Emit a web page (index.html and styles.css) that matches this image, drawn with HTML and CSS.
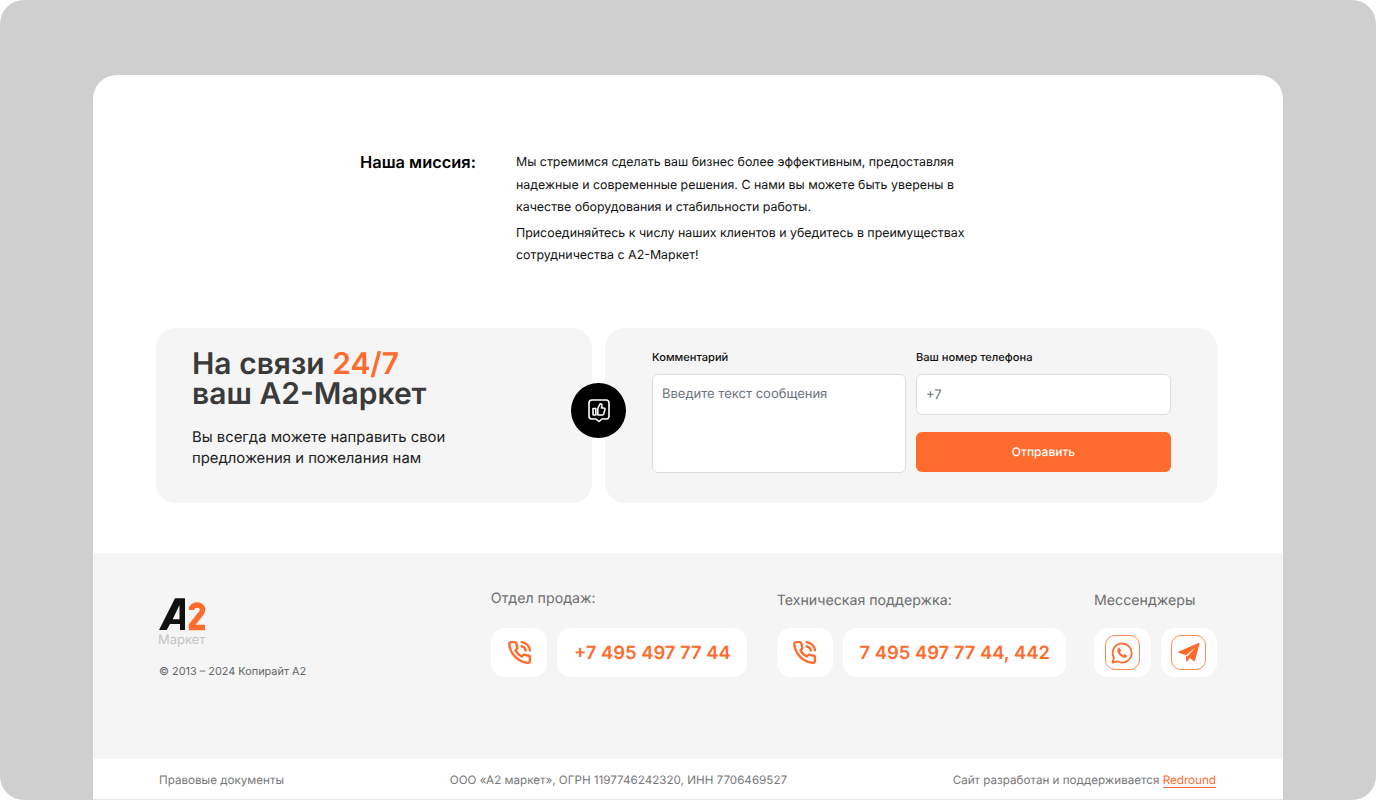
FILE: index.html
```html
<!DOCTYPE html>
<html lang="ru">
<head>
<meta charset="utf-8">
<title>А2-Маркет</title>
<link rel="stylesheet" href="styles.css">
</head>
<body>
<div class="screen">
  <main class="sheet">
    <section class="mission">
      <h2 class="mission-title">Наша миссия:</h2>
      <div class="mission-text">
        <p class="mission-p">Мы стремимся сделать ваш бизнес более эффективным, предоставляя надежные и современные решения. С нами вы можете быть уверены в качестве оборудования и стабильности работы.</p>
        <p class="mission-p">Присоединяйтесь к числу наших клиентов и убедитесь в преимуществах сотрудничества с А2-Маркет!</p>
      </div>
    </section>

    <section class="contact">
      <div class="card card-left">
        <h2 class="contact-title">На связи <span class="accent">24/7</span><br>ваш А2-Маркет</h2>
        <p class="contact-sub">Вы всегда можете направить свои предложения и пожелания нам</p>
      </div>
      <div class="badge">
        <svg width="24" height="26" viewBox="0 0 24 26" fill="none" stroke="#fff" stroke-width="1.6" stroke-linejoin="round" stroke-linecap="round">
          <path d="M5 2h14a3 3 0 0 1 3 3v13a3 3 0 0 1-3 3h-4l-3 2.500L9 21H5a3 3 0 0 1-3-3V5a3 3 0 0 1 3-3z"/>
          <path d="M6 10.500h2.800v6.500H6.800a.8.8 0 0 1-.8-.8z"/>
          <path d="M10.800 10.500l2.200-4.500c1.200-.4 2 .4 1.900 1.400l-.4 2.600h2.300c.8 0 1.300.7 1.100 1.400l-1.100 4.400c-.2.7-.7 1.200-1.400 1.200h-4.600z"/>
        </svg>
      </div>
      <form class="card card-right">
        <div class="field field-comment">
          <span class="field-label">Комментарий</span>
          <div class="input textarea">Введите текст сообщения</div>
        </div>
        <div class="field field-phone">
          <span class="field-label">Ваш номер телефона</span>
          <div class="input phone-input">+7</div>
          <div class="submit">Отправить</div>
        </div>
      </form>
    </section>

    <footer class="footer">
      <div class="brand">
        <svg class="logo" width="47" height="33" viewBox="0 0 47 33">
          <path fill="#111" fill-rule="evenodd" d="M0 32 16 .3H26V32H21V26H11L7.700 32zM20.500 7 13.700 21.300H20.500z"/>
          <path fill="none" stroke="#ff6b2c" stroke-width="5.500" d="M32.500 12C32.500 8.500 35 7 38 7c3.500 0 5.500 2 5.500 4.800 0 2.500-1.500 4.200-4 6.700L32.500 27.500V29.500H46"/>
        </svg>
        <div class="logo-text">Маркет</div>
        <div class="copyright">© 2013 – 2024 Копирайт А2</div>
      </div>

      <div class="contact-col col-sales">
        <div class="col-title">Отдел продаж:</div>
        <div class="pills">
          <div class="pill pill-icon">
            <svg class="phone" width="25" height="25" viewBox="0 0 24 24" fill="none" stroke="#ff6b2c" stroke-width="2.300" stroke-linecap="round" stroke-linejoin="round"><path d="M22 16.920v3a2 2 0 0 1-2.180 2 19.790 19.790 0 0 1-8.630-3.070 19.500 19.500 0 0 1-6-6 19.790 19.790 0 0 1-3.070-8.670A2 2 0 0 1 4.110 2h3a2 2 0 0 1 2 1.720 12.840 12.840 0 0 0 .7 2.810 2 2 0 0 1-.45 2.110L8.090 9.910a16 16 0 0 0 6 6l1.270-1.270a2 2 0 0 1 2.110-.45 12.840 12.840 0 0 0 2.810.7A2 2 0 0 1 22 16.920z"/><path d="M14.050 2a9 9 0 0 1 8 7.940"/><path d="M14.050 6A5 5 0 0 1 18 10"/></svg>
          </div>
          <div class="pill pill-num pill-sales">+7 495 497 77 44</div>
        </div>
      </div>

      <div class="contact-col col-support">
        <div class="col-title">Техническая поддержка:</div>
        <div class="pills">
          <div class="pill pill-icon">
            <svg class="phone" width="25" height="25" viewBox="0 0 24 24" fill="none" stroke="#ff6b2c" stroke-width="2.300" stroke-linecap="round" stroke-linejoin="round"><path d="M22 16.920v3a2 2 0 0 1-2.180 2 19.790 19.790 0 0 1-8.630-3.070 19.500 19.500 0 0 1-6-6 19.790 19.790 0 0 1-3.070-8.670A2 2 0 0 1 4.110 2h3a2 2 0 0 1 2 1.720 12.840 12.840 0 0 0 .7 2.810 2 2 0 0 1-.45 2.110L8.090 9.910a16 16 0 0 0 6 6l1.270-1.270a2 2 0 0 1 2.110-.45 12.840 12.840 0 0 0 2.810.7A2 2 0 0 1 22 16.920z"/><path d="M14.050 2a9 9 0 0 1 8 7.940"/><path d="M14.050 6A5 5 0 0 1 18 10"/></svg>
          </div>
          <div class="pill pill-num pill-support">7 495 497 77 44, 442</div>
        </div>
      </div>

      <div class="contact-col col-msg">
        <div class="col-title">Мессенджеры</div>
        <div class="pills">
          <div class="pill pill-icon">
            <div class="msg-frame">
              <svg width="22" height="22" viewBox="0 0 22 22" fill="none" stroke="#ff6b2c" stroke-width="1.800" stroke-linejoin="round" stroke-linecap="round"><path d="M1.500 20.500l1.400-4.800A9.500 9.500 0 1 1 6.500 19.300z"/><path fill="#ff6b2c" stroke-width=".6" d="M8 6.200c-.6 0-1.400.8-1.400 2 0 3.400 3.700 7.200 7.300 7.200 1.200 0 2-.9 2-1.500 0-.5-1.800-1.500-2.300-1.500-.5 0-.9 1-1.300 1-.9 0-3.400-2.400-3.400-3.300 0-.4 1-.8 1-1.300S8.500 6.200 8 6.200z"/></svg>
            </div>
          </div>
          <div class="pill pill-icon">
            <div class="msg-frame">
              <svg width="22" height="20" viewBox="0 0 22 20"><path fill="#ff6b2c" d="M21.500 1 17 17.500c-.2.600-.8.800-1.300.4l-4-3-2.700 3.300c-.4.500-1 .3-1-.3v-5.600L.8 9.800c-.7-.3-.7-1 0-1.200L20.500.1c.6-.2 1.100.3 1 .9z"/><path fill="#fff" d="M8 12.300 17.500 4.500 9.300 13.500z"/></svg>
            </div>
          </div>
        </div>
      </div>
    </footer>

    <div class="legal">
      <span>Правовые документы</span>
      <span>ООО «А2 маркет», ОГРН 1197746242320, ИНН 7706469527</span>
      <span>Сайт разработан и поддерживается <span class="legal-link">Redround</span></span>
    </div>
  </main>
</div>
</body>
</html>
```

FILE: styles.css
```css
* { box-sizing: border-box; }
html, body { margin: 0; padding: 0; background: #fff; }
body {
  font-family: Inter, "Noto Sans", sans-serif;
  width: 1376px;
  height: 800px;
  overflow: hidden;
  text-rendering: geometricPrecision;
}

.screen {
  width: 1376px;
  height: 800px;
  background: #cfcfcf;
  border-radius: 24px;
  padding: 75px 93px 0;
  overflow: hidden;
}
.sheet {
  background: #fff;
  border-radius: 24px 24px 0 0;
  height: 725px;
  border-bottom: 1px solid #e6e6e6;
  display: flex;
  flex-direction: column;
}

.mission {
  display: flex;
  padding: 76px 0 0 267px;
  height: 253px;
}
.mission-title {
  margin: 0;
  width: 156px;
  font-size: 16.400px;
  line-height: 22px;
  font-weight: 600;
  color: #000;
}
.mission-text { width: 460px; }
.mission-p {
  margin: 0 0 3px;
  font-size: 12.400px;
  line-height: 22.500px;
  color: #111;
}

.contact {
  position: relative;
  display: flex;
  gap: 13px;
  padding: 0 66px 0 63px;
  height: 175px;
}
.card {
  background: #f5f5f5;
  border-radius: 20px;
  height: 175px;
}
.card-left {
  width: 436px;
  padding: 21px 36px;
}
.contact-title {
  margin: 0;
  font-size: 30px;
  line-height: 30px;
  font-weight: 600;
  color: #3a3a3a;
}
.accent { color: #ff6b2c; }
.contact-sub {
  margin: 18px 0 0;
  font-size: 14.850px;
  line-height: 21px;
  color: #222;
  width: 280px;
}
.badge {
  position: absolute;
  left: 478px;
  top: 55px;
  width: 55px;
  height: 55px;
  border-radius: 50%;
  background: #000;
  display: flex;
  align-items: center;
  justify-content: center;
}
.card-right {
  width: 612px;
  padding: 22px 46px 0 47px;
  display: flex;
  gap: 10px;
}
.field { width: 254px; display: flex; flex-direction: column; }
.field-phone { width: 255px; }
.field-label {
  font-size: 11.100px;
  line-height: 15px;
  font-weight: 500;
  color: #111;
  margin-bottom: 9px;
}
.input {
  background: #fff;
  border: 1px solid #dcdde3;
  border-radius: 6px;
  font-size: 13px;
  color: #6b7280;
  padding: 0 9px;
}
.textarea { height: 99px; padding-top: 11px; line-height: 17px; }
.phone-input { height: 41px; line-height: 41px; }
.submit {
  margin-top: 17px;
  height: 40px;
  background: #ff6b2c;
  border-radius: 6px;
  color: #fff;
  font-size: 12px;
  font-weight: 500;
  line-height: 40px;
  text-align: center;
}

.footer {
  margin-top: 50px;
  height: 206px;
  background: #f5f5f5;
  display: flex;
  padding: 0 66px;
}
.brand { width: 332px; padding-top: 45px; }
.logo { display: block; }
.logo-text { font-size: 13px; line-height: 14px; color: #c4c4c4; margin: 2px 0 0 -1px; }
.copyright { font-size: 10.900px; line-height: 14px; color: #666; margin-top: 17px; }

.contact-col { padding-top: 37px; }
.col-title { font-size: 14.200px; line-height: 18px; color: #6e6e6e; margin-bottom: 20px; }
.col-sales { width: 286px; }
.col-support { width: 317.500px; }
.col-support .col-title { padding-top: 2px; margin-bottom: 18px; }
.col-msg .col-title { padding-top: 2px; margin-bottom: 18px; }
.pills { display: flex; gap: 10px; }
.pill {
  background: #fff;
  border-radius: 14px;
  height: 49px;
  display: flex;
  align-items: center;
  justify-content: center;
}
.pill-icon { width: 56.500px; }
.pill-num {
  font-size: 18.400px;
  font-weight: 600;
  color: #ff6b2c;
}
.pill-sales { width: 190px; }
.pill-support { width: 223px; }
.msg-frame {
  width: 35px;
  height: 35px;
  border: 1px solid #ff8a55;
  border-radius: 10px;
  display: flex;
  align-items: center;
  justify-content: center;
}

.legal {
  height: 40px;
  padding: 1px 67px 0 66px;
  display: flex;
  justify-content: space-between;
  align-items: center;
  font-size: 11.650px;
  color: #777;
}
.legal-link {
  color: #ff6b2c;
  border-bottom: 1px solid #ff6b2c;
}
```
